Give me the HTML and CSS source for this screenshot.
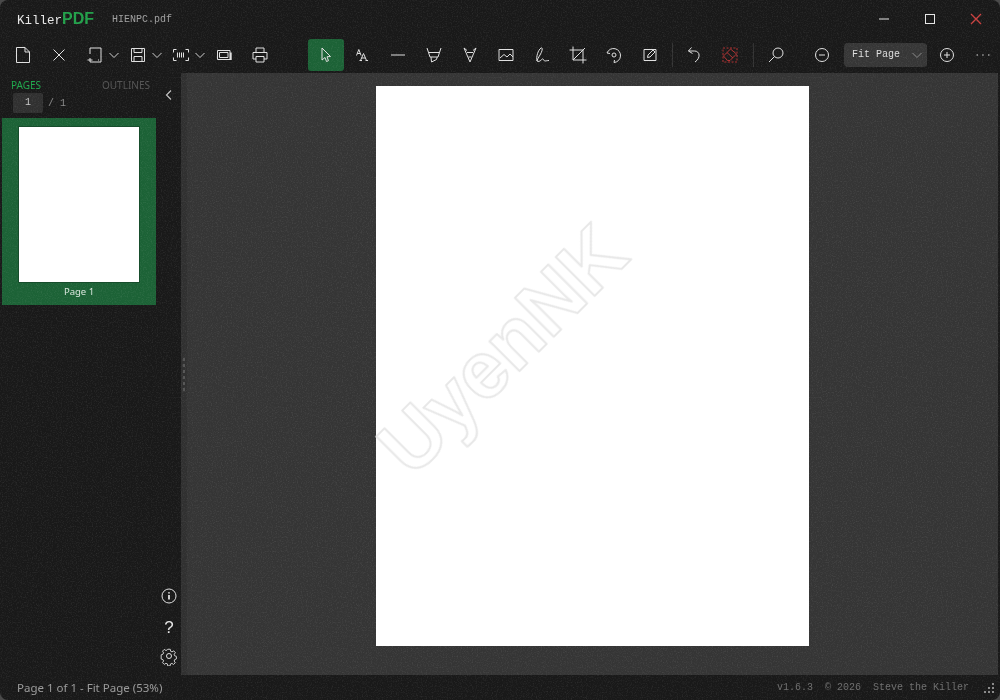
FILE: index.html
```html
<!DOCTYPE html>
<html lang="en">

<head>
  <meta charset="UTF-8">
  <title>KillerPDF</title>
  <link rel="stylesheet" href="styles.css">
</head>

<body>
  <div class="window">
    <header class="titlebar">
      <div class="logo">Killer<span class="logo-pdf">PDF</span></div>
      <div class="filename">HIENPC.pdf</div>
      <div class="win-controls">
        <button class="win-btn"><svg width="12" height="12" viewBox="0 0 12 12"><path d="M1 6h10" /></svg></button>
        <button class="win-btn"><svg width="12" height="12" viewBox="0 0 12 12"><rect x="1.5" y="1.5" width="9" height="9" /></svg></button>
        <button class="win-btn win-close"><svg width="12" height="12" viewBox="0 0 12 12"><path d="M1 1l10 10M11 1L1 11" /></svg></button>
      </div>
    </header>

    <nav class="toolbar">
      <button class="tool"><svg class="icon" viewBox="0 0 20 20"><path d="M3.500 2.500h8.500l4.500 4.500v10.500h-13zM12 2.500V7h4.500" /></svg></button>
      <button class="tool"><svg class="icon" viewBox="0 0 20 20"><path d="M4.500 4.500l11 11M15.500 4.500l-11 11" /></svg></button>

      <div class="split split-first">
        <svg class="icon" viewBox="0 0 20 20"><path d="M5 9V3h11v14H7M5 13v4h2M2.500 15h5M13 15h1" /></svg>
        <svg class="chevron" viewBox="0 0 12 12"><path d="M1.500 4l4.500 4.500L10.500 4" /></svg>
      </div>
      <div class="split">
        <svg class="icon" viewBox="0 0 20 20"><path d="M3.500 3.500h13v13h-13zM6 3.500v4h8v-4M6 16.500v-5h8v5" /></svg>
        <svg class="chevron" viewBox="0 0 12 12"><path d="M1.500 4l4.500 4.500L10.500 4" /></svg>
      </div>
      <div class="split split-last">
        <svg class="icon" viewBox="0 0 20 20"><path d="M2.500 7.500v-3h3M14.500 4.500h3v3M2.500 12.500v3h3M14.500 15.500h3v-3M6.500 7.500v5M8.500 7.500v5M10.500 7.500v5M12.500 7.500v5" /></svg>
        <svg class="chevron" viewBox="0 0 12 12"><path d="M1.500 4l4.500 4.500L10.500 4" /></svg>
      </div>

      <button class="tool tool-shot"><svg class="icon" viewBox="0 0 20 20"><path d="M3.500 5.500h12.500v9h-12.500zM5.500 7.500h8.500v5h-8.500z" /><path class="thick" d="M16.800 7.500v7.500" /></svg></button>
      <button class="tool"><svg class="icon" viewBox="0 0 20 20"><path d="M6 7V3h8v4M6 14H3V7.500h14V14h-3M6 11.500h8V17H6z" /></svg></button>

      <button class="tool tool-active tool-gap"><svg class="icon" viewBox="0 0 20 20"><path d="M6 3v12l3-2.500 1.500 4 2-.8-1.500-3.900 3.500-.3z" /></svg></button>
      <button class="tool"><svg class="icon" viewBox="0 0 20 20"><path d="M4.500 10.500l2.300-6 2.300 6M5.300 8.500h3M8.500 15.500l3-7 3 7M9.500 13h4M7.500 15.500h2.500M13.500 15.500h2.500" /></svg></button>
      <button class="tool"><svg class="icon" viewBox="0 0 20 20"><path d="M3 10h14" /></svg></button>
      <button class="tool"><svg class="icon" viewBox="0 0 20 20"><path d="M3 3l1.500 4.500h11L17 3M4.500 7.500h11L14 12H6zM7 12l.5 5 5-2.500.7-2.500" /></svg></button>
      <button class="tool"><svg class="icon" viewBox="0 0 20 20"><path d="M4 3l6 14 6-14M4 3l3 2.500M16 3l-3 2.500M7 7.500h6M8.500 12h3" /></svg></button>
      <button class="tool"><svg class="icon" viewBox="0 0 20 20"><path d="M3 4.500h14v11H3zM4 13l4-3.500 3 2.500 3-3 3 3" /></svg></button>
      <button class="tool"><svg class="icon" viewBox="0 0 20 20"><path d="M5 16C4 12 6 5 9 3c2-1 1.500 3-1 7-1.500 2.500-3 5-3 6 3 2 5-3 6-2s1 2 2 2 2-.5 4-.5" /></svg></button>
      <button class="tool"><svg class="icon" viewBox="0 0 20 20"><path d="M5 1.500V15h13.500M1.500 5H15v13.500M5 15L17 3" /></svg></button>
      <button class="tool"><svg class="icon" viewBox="0 0 20 20"><path d="M3 8a7 7 0 1 1 7 9.500M3 8l3 .5M10 17.500l.5-2.500" /><circle cx="10" cy="10" r="2" /></svg></button>
      <button class="tool"><svg class="icon" viewBox="0 0 20 20"><path d="M4 4.500h12v11H4zM7.500 12.500l.5-2.500 5-5 2 2-5 5z" /></svg></button>

      <span class="tool-sep"></span>
      <button class="tool"><svg class="icon" viewBox="0 0 20 20"><path d="M7.500 2.500L4.500 6l4 2.500M4.500 6h6c5.500 0 6.500 7 .5 11" /></svg></button>
      <button class="tool"><svg class="icon icon-red" viewBox="0 0 20 20"><path class="dash" d="M3 3h14v14H3z" /><path d="M3.500 11l7-7 6 5-6.500 6.500H7.500zM7 7.500l6 5.500" /></svg></button>
      <span class="tool-sep tool-sep-2"></span>
      <button class="tool"><svg class="icon" viewBox="0 0 20 20"><circle cx="12" cy="8" r="5" /><path d="M8.500 11.500L3 17" /></svg></button>

      <button class="tool tool-zoom-out"><svg class="icon" viewBox="0 0 20 20"><circle cx="10" cy="10" r="6.500" /><path d="M7 10h6" /></svg></button>
      <div class="zoom-select">
        <span>Fit Page</span>
        <svg class="chevron chevron-dim" viewBox="0 0 12 12"><path d="M1.500 4l4.500 4.500L10.500 4" /></svg>
      </div>
      <button class="tool tool-zoom-in"><svg class="icon" viewBox="0 0 20 20"><circle cx="10" cy="10" r="6.500" /><path d="M7 10h6M10 7v6" /></svg></button>
      <button class="tool tool-more"><svg class="icon icon-dim" viewBox="0 0 20 20"><path d="M3.500 10h1.500M9.200 10h1.500M15 10h1.500" /></svg></button>
    </nav>

    <div class="content">
      <aside class="sidebar">
        <div class="tabs">
          <span class="tab tab-active">PAGES</span>
          <span class="tab">OUTLINES</span>
        </div>
        <svg class="collapse" viewBox="0 0 12 12"><path d="M8 1.500L3.500 6 8 10.500" /></svg>
        <div class="pager">
          <span class="page-input">1</span>
          <span class="page-total">/ 1</span>
        </div>
        <div class="thumb">
          <div class="thumb-page"></div>
          <div class="thumb-label">Page 1</div>
        </div>
        <div class="side-icons">
          <svg class="icon" viewBox="0 0 20 20"><circle cx="10" cy="10" r="7" /><path class="thick" d="M10 9v4.500M10 6.200v1.200" /></svg>
          <span class="help">?</span>
          <svg class="icon" viewBox="0 0 20 20"><circle cx="10" cy="10" r="2.500" /><path d="M8.600 2.500h2.800l.4 2.200 1.500.7 2-1.100 1.800 2-1.300 1.800.4 1.600 2 .8v2.800l-2 .8-.4 1.500 1.200 1.900-1.900 1.900-1.900-1.200-1.500.6-.5 2.200H8.600l-.4-2.200-1.600-.7-1.900 1.200-1.900-1.900 1.200-1.900-.7-1.500-2-.6V8.700l2-.7.700-1.500-1.200-1.900 1.900-1.900 1.900 1.200 1.500-.7z" transform="translate(1 1) scale(.9)" /></svg>
        </div>
      </aside>

      <div class="splitter">
        <span></span><span></span><span></span><span></span><span></span><span></span>
      </div>

      <main class="viewer">
        <div class="page">
          <svg class="watermark" width="433" height="560" viewBox="0 0 433 560">
            <text x="126" y="263" text-anchor="middle" dominant-baseline="central" transform="rotate(-45 126 263)">UyenNK</text>
          </svg>
        </div>
      </main>
    </div>

    <footer class="statusbar">
      <span class="status-left">Page 1 of 1 - Fit Page (53%)</span>
      <span class="status-right">
        <span>v1.6.3</span>
        <span>© 2026</span>
        <span>Steve the Killer</span>
      </span>
      <svg class="grip" width="12" height="12" viewBox="0 0 12 12"><path d="M9 1h2v2H9zM5 5h2v2H5zM9 5h2v2H9zM1 9h2v2H1zM5 9h2v2H5zM9 9h2v2H9z" /></svg>
    </footer>

    <!-- film grain over the window, the white pages sit above it -->
    <svg class="grain" width="1000" height="700">
      <filter id="grain-filter">
        <feTurbulence type="fractalNoise" baseFrequency="0.8" numOctaves="2" seed="4" />
        <feColorMatrix values="0 0 0 0 1  0 0 0 0 1  0 0 0 0 1  1.400 0 0 0 -0.620" />
      </filter>
      <rect width="1000" height="700" filter="url(#grain-filter)" />
    </svg>
  </div>
</body>

</html>
```

FILE: styles.css
```css
html,
body {
  margin: 0;
  height: 100%;
  background-color: #4a4a4a;
}

body {
  font-family: "Noto Sans", sans-serif;
  overflow: hidden;
}

button {
  border: none;
  background: none;
  padding: 0;
  display: flex;
  align-items: center;
  justify-content: center;
}

.window {
  width: 1000px;
  height: 700px;
  position: relative;
  display: flex;
  flex-direction: column;
  border-radius: 8px;
  overflow: hidden;
  background-color: #191919;
  will-change: transform;
}

.grain {
  position: absolute;
  left: 0;
  top: 0;
  opacity: 0.14;
  pointer-events: none;
}

/* Title bar */
.titlebar {
  height: 36px;
  display: flex;
  align-items: center;
  padding-left: 17px;
  flex-shrink: 0;
}

.logo {
  font-family: "Liberation Mono", monospace;
  font-size: 12.500px;
  color: #e8e8e8;
  width: 95px;
  padding-top: 2px;
}

.logo-pdf {
  font-family: "Liberation Sans", sans-serif;
  font-size: 16px;
  font-weight: bold;
  color: #22a04a;
}

.filename {
  font-family: "Liberation Mono", monospace;
  font-size: 10px;
  color: #a0a0a0;
  padding-top: 2px;
}

.win-controls {
  margin-left: auto;
  margin-right: 1px;
  display: flex;
  padding-top: 2px;
}

.win-btn {
  width: 46px;
  height: 30px;
}

.win-btn svg {
  fill: none;
  stroke: #e6e6e6;
  stroke-width: 1;
}

.win-close svg {
  stroke: #c9403f;
  stroke-width: 1.400;
}

/* Toolbar */
.toolbar {
  height: 37px;
  display: flex;
  align-items: center;
  padding-left: 5px;
  flex-shrink: 0;
}

.tool {
  width: 36px;
  height: 32px;
  border-radius: 3px;
  flex-shrink: 0;
}

.tool-more {
  width: 35px;
}

.icon {
  width: 20px;
  height: 20px;
  fill: none;
  stroke: #e0e0e0;
  stroke-width: 1;
}

.icon .thick {
  stroke-width: 1.800;
}

.icon-red {
  stroke: #b03232;
}

.icon-red .dash {
  stroke-dasharray: 2 1.500;
}

.icon-dim {
  stroke: #9a9a9a;
  stroke-width: 1.500;
}

.chevron {
  width: 12px;
  height: 12px;
  fill: none;
  stroke: #cfcfcf;
  stroke-width: 1;
}

.chevron-dim {
  stroke: #8a8a8a;
}

.split {
  width: 38px;
  margin-right: 5px;
  display: flex;
  align-items: center;
  padding-left: 2px;
  box-sizing: border-box;
  gap: 3px;
  flex-shrink: 0;
}

.split-first {
  margin-left: 6px;
}

.split-last {
  margin-right: 0;
}

.tool-shot {
  margin-left: -1px;
}

.tool-gap {
  margin-left: 30px;
}

.tool-active {
  background-color: #1c6236;
}

.tool-sep {
  width: 1px;
  height: 24px;
  margin: 0 3px 0 4px;
  background-color: #333;
  flex-shrink: 0;
}

.tool-sep-2 {
  margin: 0 4px 0 5px;
}

.tool-zoom-out {
  margin-left: 10px;
}

.tool-zoom-in {
  margin-left: 2px;
}

.zoom-select {
  width: 83px;
  height: 24px;
  margin-left: 4px;
  border-radius: 4px;
  background-color: #363636;
  box-sizing: border-box;
  padding: 0 4px 0 8px;
  display: flex;
  align-items: center;
  justify-content: space-between;
  font-family: "Liberation Mono", monospace;
  font-size: 10px;
  color: #dcdcdc;
  flex-shrink: 0;
}

/* Main area */
.content {
  flex: 1;
  display: flex;
  min-height: 0;
}

.sidebar {
  width: 181px;
  flex-shrink: 0;
  display: flex;
  flex-direction: column;
  position: relative;
}

.tabs {
  height: 20px;
  box-sizing: border-box;
  padding: 4px 0 0 11px;
  display: flex;
  align-items: center;
  font-size: 10px;
}

.tab {
  color: #555;
  flex: none;
}

.tab-active {
  color: #1fa64c;
  width: 91px;
}

.collapse {
  position: absolute;
  right: 6px;
  top: 16px;
  width: 12px;
  height: 12px;
  fill: none;
  stroke: #c8c8c8;
  stroke-width: 1.100;
}

.pager {
  display: flex;
  align-items: center;
  height: 20px;
  padding-left: 13px;
  font-family: "Liberation Mono", monospace;
  font-size: 10px;
  color: #c8c8c8;
}

.page-input {
  width: 30px;
  height: 20px;
  line-height: 20px;
  text-align: center;
  background-color: #303030;
  border-radius: 2px;
}

.page-total {
  margin-left: 5px;
  color: #8a8a8a;
}

.thumb {
  width: 154px;
  height: 187px;
  margin: 5px 0 0 2px;
  box-sizing: border-box;
  padding: 8px 16px 0;
  background-color: #1c6236;
}

.thumb-page {
  height: 157px;
  background-color: #fff;
  border: 1px solid #174d2c;
  box-sizing: border-box;
  position: relative;
  z-index: 1;
}

.thumb-label {
  margin-top: 2px;
  text-align: center;
  font-size: 9.500px;
  color: #d8e6dc;
}

.side-icons {
  position: absolute;
  right: 2px;
  bottom: 9px;
  width: 20px;
  display: flex;
  flex-direction: column;
  align-items: center;
  gap: 10px;
}

.help {
  height: 20px;
  line-height: 24px;
  font-family: "Liberation Sans", sans-serif;
  font-size: 17px;
  color: #e4e4e4;
}

.splitter {
  width: 6px;
  flex-shrink: 0;
  background-color: #303030;
  display: flex;
  flex-direction: column;
  align-items: center;
  justify-content: center;
  gap: 3px;
}

.splitter span {
  width: 2px;
  height: 3px;
  background-color: #555;
}

.viewer {
  flex: 1;
  margin-right: 2px;
  padding-top: 13px;
  display: flex;
  justify-content: center;
  align-items: flex-start;
  background-color: #353535;
}

.page {
  width: 433px;
  height: 560px;
  background-color: #fff;
  position: relative;
  z-index: 1;
}

.watermark {
  position: absolute;
  left: 0;
  top: 0;
  overflow: visible;
}

.watermark text {
  font-family: "Liberation Sans", sans-serif;
  font-weight: bold;
  font-size: 80px;
  fill: #fff;
  stroke: #e8e8e8;
  stroke-width: 2;
  stroke-linejoin: round;
}

/* Status bar */
.statusbar {
  height: 25px;
  display: flex;
  align-items: center;
  padding: 0 5px 0 17px;
  flex-shrink: 0;
}

.status-left {
  font-size: 11.500px;
  color: #9a9a9a;
}

.status-right {
  margin-left: auto;
  display: flex;
  gap: 12px;
  font-family: "Liberation Mono", monospace;
  font-size: 10px;
  color: #6e6e6e;
}

.grip {
  margin-left: 14px;
  fill: #8a8a8a;
}
```
